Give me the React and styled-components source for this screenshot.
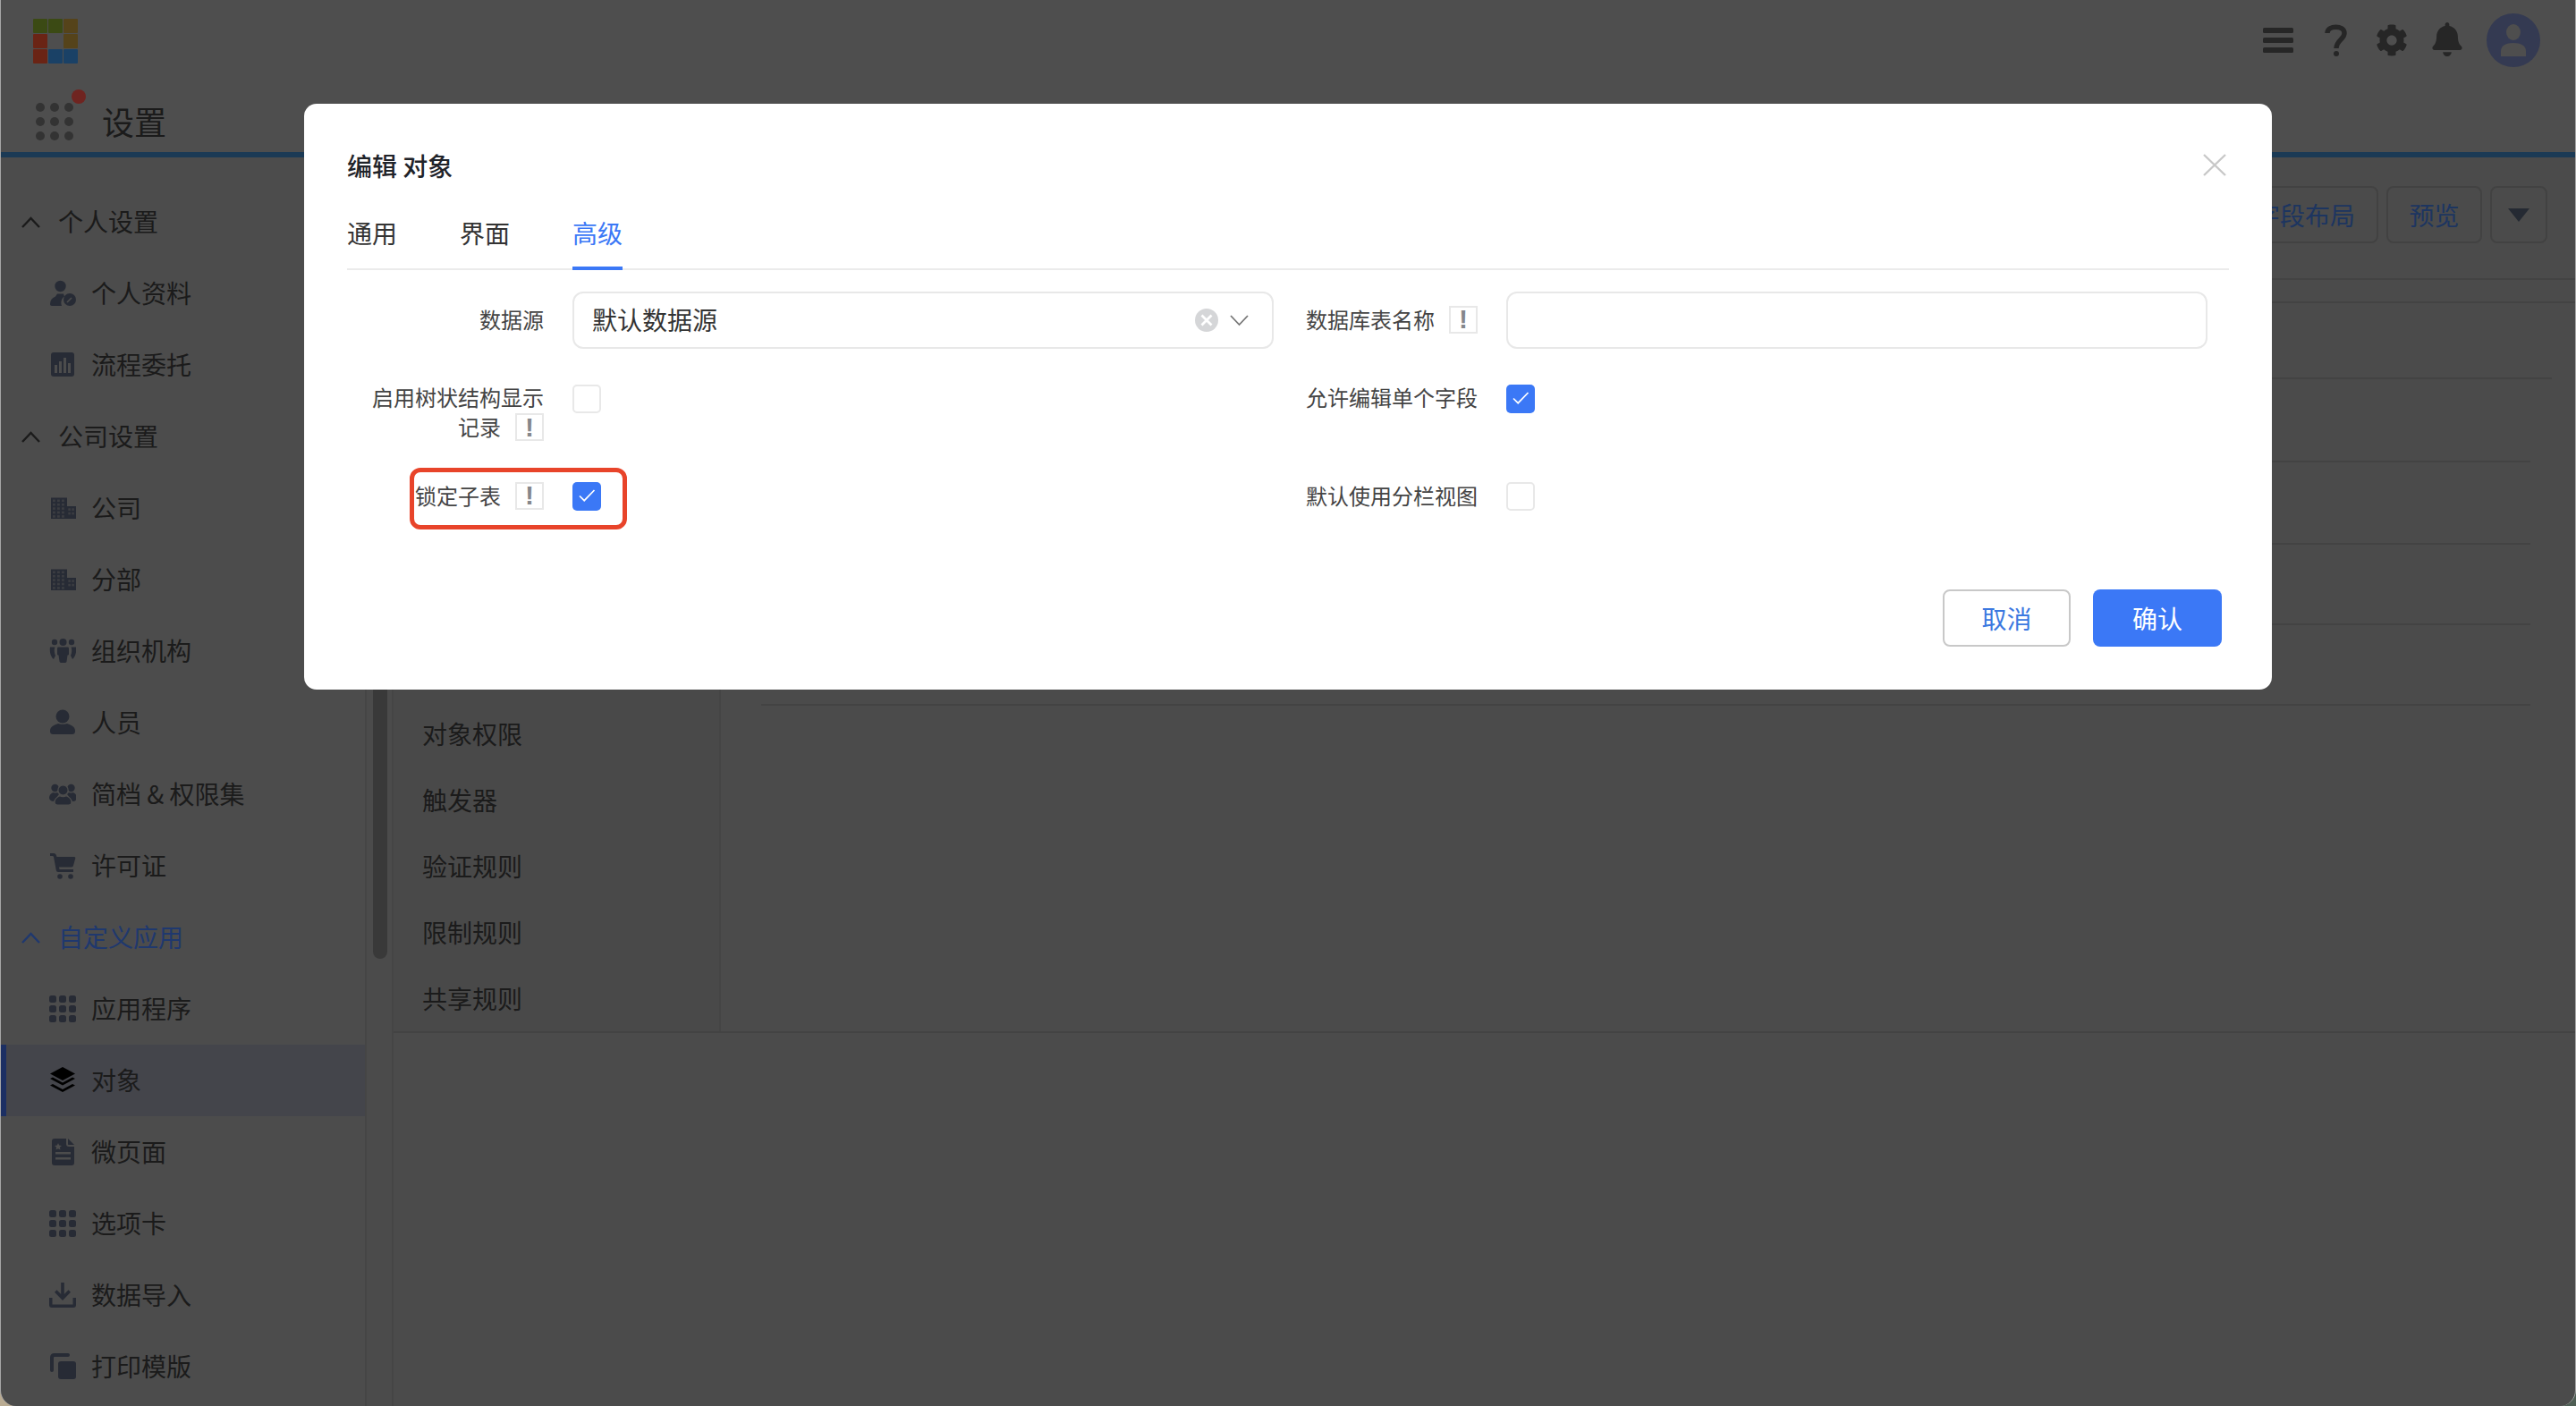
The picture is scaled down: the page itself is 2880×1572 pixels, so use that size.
import React from 'react';
import styled, { createGlobalStyle } from 'styled-components';
import { FaBell, FaCog } from 'react-icons/fa';

// the page behind the dialog is painted at twice its final brightness, the 50% mask halves it
const GlobalStyle = createGlobalStyle`
  html, body { margin: 0; padding: 0; }
  body {
    background: linear-gradient(90deg, #b9ab92 0 50%, #4f5f55 50% 100%);
    font-family: "Noto Sans CJK SC", "Noto Sans", sans-serif;
  }
  * { box-sizing: border-box; }
`;

const Window = styled.div`
  position: relative;
  width: 2880px;
  height: 1572px;
  overflow: hidden;
  border-radius: 0 0 18px 18px;
  background: #969696;
  display: flex;
  flex-direction: column;
  border-left: 1px solid #a6a6a6;
  border-right: 1px solid #a6a6a6;
`;

const TopBar = styled.header`
  height: 90px;
  background: #9c9c9c;
  display: flex;
  align-items: center;
  justify-content: space-between;
  padding: 0 39px 0 36px;
`;

const Logo = styled.div`
  display: grid;
  grid-template-columns: repeat(3, 16px);
  grid-auto-rows: 16px;
  gap: 1px;
  margin-top: 2px;
`;

const LogoCell = styled.span`
  background: ${p => p.$c};
  border-radius: 1px;
`;

const TopIcons = styled.div`
  display: flex;
  align-items: center;
`;

const TopIcon = styled.svg`
  display: block;
  color: #4c4c4c;
  margin-left: ${p => p.$ml || 0}px;
  margin-top: ${p => p.$mt || 0}px;
`;

const Avatar = styled.div`
  width: 60px;
  height: 60px;
  margin-left: 25px;
  border-radius: 50%;
  background: #6874a4;
  display: flex;
  align-items: center;
  justify-content: center;
`;

const AppBar = styled.div`
  height: 86px;
  padding: 12px 0 0 39px;
  background: #9c9c9c;
  border-bottom: 6px solid #3674aa;
  display: flex;
  align-items: center;
  gap: 32px;
`;

const Launcher = styled.div`
  position: relative;
  display: grid;
  grid-template-columns: repeat(3, 10px);
  grid-auto-rows: 10px;
  gap: 6px;
`;

const LauncherDot = styled.span`
  border-radius: 50%;
  background: #666;
`;

const Badge = styled.span`
  position: absolute;
  top: -15px;
  right: -14px;
  width: 16px;
  height: 16px;
  border-radius: 50%;
  background: #de4840;
`;

const AppTitle = styled.div`
  font-size: 36px;
  line-height: 48px;
  margin-top: -3px;
  color: #363636;
`;

const Main = styled.div`
  flex: 1;
  min-height: 0;
  display: flex;
`;

const Sidebar = styled.nav`
  width: 407px;
  padding-top: 32px;
  background: #989898;
  flex-shrink: 0;
`;

const SectionRow = styled.div`
  height: 80px;
  display: flex;
  align-items: center;
  gap: 20px;
  padding-left: 23px;
  font-size: 28px;
  color: ${p => (p.$blue ? '#3f70dc' : '#363636')};
`;

const NavRow = styled.div`
  height: 80px;
  display: flex;
  align-items: center;
  gap: 17px;
  padding-left: 54px;
  font-size: 28px;
  color: #363636;
  position: relative;
  background: ${p => (p.$active ? '#888a96' : 'transparent')};

  ${p => p.$active && `
    &::before {
      content: '';
      position: absolute;
      left: 0;
      top: 0;
      bottom: 0;
      width: 6px;
      background: #385ec6;
    }
  `}
`;

const RowLabel = styled.span`
  margin-bottom: 3px;
`;

const NavIcon = styled.svg`
  width: 30px;
  height: 30px;
  flex-shrink: 0;
  color: ${p => (p.$active ? '#000' : '#4e566a')};
`;

const Track = styled.div`
  width: 32px;
  flex-shrink: 0;
  padding: 20px 6px 0 7px;
  background: #969696;
  border-left: 2px solid #8a8a8a;
  border-right: 2px solid #8a8a8a;
`;

const Thumb = styled.div`
  width: 16px;
  height: 876px;
  border-radius: 0 0 8px 8px;
  background: #727272;
`;

const Content = styled.main`
  flex: 1;
  min-width: 0;
  display: flex;
  flex-direction: column;
`;

const ContentHeader = styled.div`
  height: 137px;
  padding: 32px 31px 0 0;
  display: flex;
  justify-content: flex-end;
  gap: 9px;
  border-bottom: 2px solid #868686;
`;

const HeaderButton = styled.button`
  height: 64px;
  width: ${p => p.$w}px;
  padding: 0;
  display: flex;
  align-items: center;
  justify-content: center;
  border: 2px solid #848484;
  border-radius: 8px;
  background: transparent;
  font-family: inherit;
  font-size: 28px;
  color: #3a6ac0;
`;

const Caret = styled.svg`
  width: 24px;
  height: 15px;
  color: #4a5466;
`;

const SubHeader = styled.div`
  height: 26px;
  border-bottom: 2px solid #868686;
`;

const Panel = styled.div`
  height: 816px;
  display: flex;
  border-bottom: 2px solid #868686;
`;

// the upper entries of this list sit behind the dialog
const SubNav = styled.div`
  width: 366px;
  padding: 445px 0 0 32px;
  background: #939393;
  border-right: 2px solid #8a8a8a;
  flex-shrink: 0;
`;

const SubNavItem = styled.div`
  height: 74px;
  padding-bottom: 3px;
  display: flex;
  align-items: center;
  font-size: 28px;
  color: #363636;
`;

const Rows = styled.div`
  flex: 1;
  padding: 0 50px 0 45px;
`;

const Row = styled.div`
  height: ${p => p.$h}px;
  margin-right: ${p => (p.$wide ? -24 : 0)}px;
  border-bottom: 2px solid #868686;
`;

const Mask = styled.div`
  position: absolute;
  inset: 0;
  background: rgba(0, 0, 0, 0.5);
  display: flex;
  justify-content: center;
  align-items: flex-start;
  padding-top: 116px;
`;

const Modal = styled.div`
  position: relative;
  width: 2200px;
  height: 655px;
  padding: 0 48px;
  background: #fff;
  border-radius: 14px;
`;

const ModalTitle = styled.h2`
  margin: 0;
  padding-top: 51px;
  font-size: 28px;
  line-height: 36px;
  font-weight: 500;
  color: #1f2329;
`;

const CloseIcon = styled.svg`
  position: absolute;
  top: 56px;
  right: 51px;
  width: 26px;
  height: 25px;
  color: #c8c8c8;
`;

const Tabs = styled.div`
  display: flex;
  align-items: flex-start;
  gap: 70px;
  height: 99px;
  padding-top: 39px;
  border-bottom: 2px solid #ebebeb;
`;

const Tab = styled.div`
  width: 56px;
  height: 60px;
  font-size: 28px;
  line-height: 36px;
  white-space: nowrap;
  color: ${p => (p.$active ? '#3b78f6' : '#333')};
  border-bottom: ${p => (p.$active ? '4px solid #3b78f6' : '0')};
`;

const Form = styled.div`
  display: grid;
  grid-template-columns: 1036px 1008px;
  column-gap: 36px;
  row-gap: 40px;
  grid-template-rows: 64px 68px 34px;
  padding-top: 24px;
`;

const Field = styled.div`
  position: relative;
  display: flex;
  gap: 32px;
  align-items: ${p => (p.$top ? 'flex-start' : 'center')};
`;

const Label = styled.div`
  width: ${p => p.$w}px;
  flex-shrink: 0;
  text-align: right;
  font-size: 24px;
  line-height: 33px;
  color: #444;
  margin-top: ${p => p.$mt || -4}px;
`;

const Hint = styled.span`
  display: inline-flex;
  align-items: center;
  justify-content: center;
  width: 32px;
  height: 31px;
  margin: 2px 0 0 16px;
  vertical-align: top;
  border: 2px solid #e8e8e8;
  font-family: "Liberation Sans", sans-serif;
  font-size: 30px;
  font-weight: 700;
  line-height: 1;
  color: #85878b;
`;

const Select = styled.div`
  flex: 1;
  height: 64px;
  padding: 0 26px 0 20px;
  display: flex;
  align-items: center;
  border: 2px solid #e8e8e8;
  border-radius: 12px;
  font-size: 28px;
  color: #333;
`;

const SelectValue = styled.span`
  flex: 1;
  margin-bottom: 2px;
`;

const ClearIcon = styled.svg`
  width: 26px;
  height: 26px;
  margin-right: 13px;
`;

const Chevron = styled.svg`
  width: 21px;
  height: 13px;
  color: #777;
`;

const TextInput = styled.div`
  flex: 1;
  height: 64px;
  border: 2px solid #e8e8e8;
  border-radius: 12px;
`;

const Checkbox = styled.span`
  width: 32px;
  height: 32px;
  flex-shrink: 0;
  display: flex;
  align-items: center;
  justify-content: center;
  border-radius: 5px;
  border: ${p => (p.$checked ? '0' : '2px solid #e8e8e8')};
  background: ${p => (p.$checked ? '#3b78f6' : '#fff')};
`;

const Highlight = styled.div`
  position: absolute;
  left: 70px;
  top: -15px;
  width: 243px;
  height: 69px;
  border: 5px solid #e8442a;
  border-radius: 12px;
  pointer-events: none;
`;

const Footer = styled.div`
  position: absolute;
  right: 56px;
  top: 543px;
  display: flex;
  gap: 25px;
`;

const CancelButton = styled.button`
  width: 143px;
  height: 64px;
  border: 2px solid #c8c8c8;
  border-radius: 8px;
  background: #fff;
  font-family: inherit;
  font-size: 28px;
  color: #3b78e0;
`;

const ConfirmButton = styled(CancelButton)`
  width: 144px;
  border: 0;
  background: #3b78f6;
  color: #fff;
`;

const Tick = () => (
  <svg width="32" height="32" viewBox="0 0 32 32" fill="none">
    <path d="M8 15.5l5.2 5.2L24.5 9" stroke="#fff" strokeWidth="1.700" />
  </svg>
);

const windows = [];
for (let r = 0; r < 5; r++) {
  for (let c = 0; c < 3; c++) windows.push([4 + c * 5, 5.5 + r * 4.4]);
}
const annex = [[22.5, 16.5], [26.5, 16.5], [22.5, 21], [26.500, 21]];

const Building = () => (
  <>
    <rect x="2" y="3.500" width="18" height="23.500" />
    <rect x="20" y="13" width="10" height="14" />
    {windows.map(([x, y]) => <rect key={`${x}-${y}`} x={x} y={y} width="2.800" height="2.600" fill="#989898" opacity="0.55" />)}
    {annex.map(([x, y]) => <rect key={`${x}-${y}`} x={x - 1.2} y={y - 1.2} width="2.600" height="2.600" fill="#989898" opacity="0.55" />)}
  </>
);

const AppsGrid = () => (
  <>
    {[0, 11, 22].map(y => [0, 11, 22].map(x => (
      <rect key={`${x}-${y}`} x={x} y={y} width="8" height="8" rx="2.5" />
    )))}
  </>
);

const iconShapes = {
  profile: (
    <>
      <circle cx="12.500" cy="7" r="6.200" />
      <path d="M1 27c0-4 2-7 6-8.500l2-3h7l1 3c-3 2-4.500 6-3 10.500H3c-1.200 0-2-.8-2-2z" />
      <circle cx="23" cy="22" r="7" />
      <path d="M20 25l5-5" stroke="#989898" strokeWidth="1.600" />
    </>
  ),
  bars: (
    <>
      <rect x="2" y="1" width="26" height="27" rx="3" />
      <g fill="#989898">
        <rect x="6" y="15" width="3" height="9" />
        <rect x="11" y="11" width="3" height="13" />
        <rect x="16" y="7" width="3" height="17" />
        <rect x="21" y="13" width="3" height="11" />
      </g>
    </>
  ),
  building: <Building />,
  org: (
    <>
      <circle cx="6" cy="5" r="3.200" />
      <circle cx="15.500" cy="5" r="4" />
      <circle cx="25" cy="5" r="3.200" />
      <path d="M10.500 10.500h10c1 0 1.500.6 1.500 1.500V18c0 1-.6 1.500-1.500 1.500l-1 7c-.2 1-1 1.500-3.500 1.500H15c-2.500 0-3.300-.5-3.500-1.500l-1-7c-1 0-1.500-.5-1.500-1.500v-6c0-.9.500-1.500 1.500-1.500z" />
      <path d="M1 10.500h5.500c-1 2-1 6.500.5 9.500l-2 4C2.500 22 0 17 1 10.500zM30 10.500h-5.500c1 2 1 6.500-.5 9.500l2 4c2.500-2 5-7 4-13.500z" />
    </>
  ),
  person: (
    <>
      <circle cx="15" cy="8" r="7.500" />
      <path d="M1 24c0-5 6-7 9-8 1.500 1 8.500 1 10 0 3 1 9 3 9 8 0 3-1 4-4 4H5c-3 0-4-1-4-4z" />
    </>
  ),
  profiles: (
    <>
      <circle cx="6.500" cy="8" r="4.200" />
      <circle cx="24.500" cy="8" r="4.200" />
      <path d="M0 19c0-3 2-5 4.500-6 1.200.8 3 .8 4.500 0l2 2-6 8C2 23 0 21 0 19zM31 19c0-3-2-5-4.500-6-1.200.8-3 .8-4.500 0l-2 2 6 8c3 0 5-2 5-4z" />
      <circle cx="15.500" cy="10.500" r="5.600" stroke="#989898" strokeWidth="1.200" />
      <path d="M6 24c0-4 3-6 6-7.200 1.500 1 5.500 1 7 0 3 1.200 6 3.200 6 7.200 0 2-1 3-3 3H9c-2 0-3-1-3-3z" stroke="#989898" strokeWidth="1.200" />
    </>
  ),
  cart: (
    <>
      <path d="M1 1h4c1.500 0 2.500 1 3 2.500L8.500 5H28c1 0 1.500.8 1.200 1.800l-2.200 8c-.3 1-1 1.700-2 1.700H11l.5 2.500H27v3H10c-1.200 0-2-.8-2.200-2L5 5c-.2-.7-.7-1-1.300-1H1z" />
      <circle cx="12" cy="27" r="2.800" />
      <circle cx="24" cy="27" r="2.800" />
    </>
  ),
  apps: <AppsGrid />,
  layers: (
    <>
      <path d="M15 0L29 7.500 15 15 1 7.500z" />
      <path d="M1 13l3-1.500L15 17.500l11-6 3 1.500-14 7.500z" />
      <path d="M1 20.500l3-1.500L15 25l11-6 3 1.500L15 28z" />
    </>
  ),
  page: (
    <>
      <path d="M6 0h13v6c0 2 1 3 3 3h6v18c0 2-1 3-3 3H6c-2 0-3-1-3-3V3c0-2 1-3 3-3z" />
      <path d="M21 0l7 7h-6c-.6 0-1-.4-1-1z" />
      <path d="M10 5l1.200 2.600 2.800.3-2.100 1.900.6 2.800L10 11.200l-2.500 1.400.6-2.800L6 7.900l2.800-.3z" fill="#989898" />
      <rect x="7" y="15" width="17" height="2.500" fill="#989898" />
      <rect x="7" y="21" width="17" height="2.500" fill="#989898" />
    </>
  ),
  download: (
    <>
      <path d="M13.200 1h3.600v13l4.700-4.700 2.500 2.500L15 21 6 11.800l2.500-2.500 4.700 4.700z" />
      <path d="M0 18h3.500v7.500h23V18H30v8c0 2-1 3-3 3H3c-2 0-3-1-3-3z" />
    </>
  ),
  copy: (
    <>
      <path d="M3 19V5c0-2 1-3 3-3h15" fill="none" stroke="currentColor" strokeWidth="4" strokeLinecap="round" />
      <rect x="10" y="9" width="20" height="20" rx="3" />
    </>
  ),
};

const sidebarRows = [
  { section: '个人设置' },
  { label: '个人资料', icon: 'profile' },
  { label: '流程委托', icon: 'bars' },
  { section: '公司设置' },
  { label: '公司', icon: 'building' },
  { label: '分部', icon: 'building' },
  { label: '组织机构', icon: 'org' },
  { label: '人员', icon: 'person' },
  { label: '简档 & 权限集', icon: 'profiles' },
  { label: '许可证', icon: 'cart' },
  { section: '自定义应用', blue: true },
  { label: '应用程序', icon: 'apps' },
  { label: '对象', icon: 'layers', active: true },
  { label: '微页面', icon: 'page' },
  { label: '选项卡', icon: 'apps' },
  { label: '数据导入', icon: 'download' },
  { label: '打印模版', icon: 'copy' },
];

const logoColors = ['#769428', '#769428', '#aa8634', '#d4482a', 'transparent', '#aa8634', '#d4482a', '#3482cc', '#3482cc'];
const subNavItems = ['对象权限', '触发器', '验证规则', '限制规则', '共享规则'];
const contentRows = [
  { h: 85, wide: true },
  { h: 93 },
  { h: 92 },
  { h: 90 },
  { h: 90 },
];

const SectionChevron = ({ blue }) => (
  <svg width="21" height="13" viewBox="0 0 21 13" fill="none" stroke={blue ? '#3f70dc' : '#363636'} strokeWidth="2.400">
    <path d="M1 12l9.500-10L20 12" />
  </svg>
);

const App = () => (
  <>
    <GlobalStyle />
    <Window>
      <TopBar>
        <Logo>
          {logoColors.map((c, i) => <LogoCell key={i} $c={c} />)}
        </Logo>
        <TopIcons>
          <TopIcon width="34" height="28" viewBox="0 0 34 28" fill="currentColor">
            <rect width="34" height="6" rx="1.500" />
            <rect y="11" width="34" height="6" rx="1.500" />
            <rect y="22" width="34" height="6" rx="1.500" />
          </TopIcon>
          <TopIcon $ml={35} width="25" height="36" viewBox="0 0 25 36" fill="none">
            <path d="M3 10C3 1 22 1 22 10c0 7-9 8-9 17" stroke="currentColor" strokeWidth="5.500" />
            <circle cx="13" cy="33" r="3" fill="currentColor" />
          </TopIcon>
          <TopIcon as={FaCog} $ml={32} size={36} />
          <TopIcon as={FaBell} $ml={25} size={38} $mt={-2} />
          <Avatar>
            <svg width="30" height="36" viewBox="0 0 30 36" fill="#9c9c9c">
              <ellipse cx="15" cy="9" rx="8" ry="9" />
              <path d="M1 36v-6c0-6 6-9 14-9s14 3 14 9v6z" />
            </svg>
          </Avatar>
        </TopIcons>
      </TopBar>
      <AppBar>
        <Launcher>
          {Array.from({ length: 9 }, (_, i) => <LauncherDot key={i} />)}
          <Badge />
        </Launcher>
        <AppTitle>设置</AppTitle>
      </AppBar>
      <Main>
        <Sidebar>
          {sidebarRows.map(row => (row.section ? (
            <SectionRow key={row.section} $blue={row.blue}>
              <SectionChevron blue={row.blue} />
              <RowLabel>{row.section}</RowLabel>
            </SectionRow>
          ) : (
            <NavRow key={row.label} $active={row.active}>
              <NavIcon viewBox="0 0 30 30" fill="currentColor" $active={row.active}>{iconShapes[row.icon]}</NavIcon>
              <RowLabel>{row.label}</RowLabel>
            </NavRow>
          )))}
        </Sidebar>
        <Track>
          <Thumb />
        </Track>
        <Content>
          <ContentHeader>
            <HeaderButton $w={164}>字段布局</HeaderButton>
            <HeaderButton $w={107}>预览</HeaderButton>
            <HeaderButton $w={64}>
              <Caret viewBox="0 0 24 15" fill="currentColor"><path d="M0 0h24L12 15z" /></Caret>
            </HeaderButton>
          </ContentHeader>
          <SubHeader />
          <Panel>
            <SubNav>
              {subNavItems.map(item => <SubNavItem key={item}>{item}</SubNavItem>)}
            </SubNav>
            <Rows>
              {contentRows.map((row, i) => <Row key={i} $h={row.h} $wide={row.wide} />)}
            </Rows>
          </Panel>
        </Content>
      </Main>
      <Mask>
        <Modal>
          <ModalTitle>编辑 对象</ModalTitle>
          <CloseIcon viewBox="0 0 26 25" fill="none" stroke="currentColor" strokeWidth="2.400">
            <path d="M1 1l24 23M25 1L1 24" />
          </CloseIcon>
          <Tabs>
            <Tab>通用</Tab>
            <Tab>界面</Tab>
            <Tab $active>高级</Tab>
          </Tabs>
          <Form>
            <Field>
              <Label $w={220}>数据源</Label>
              <Select>
                <SelectValue>默认数据源</SelectValue>
                <ClearIcon viewBox="0 0 26 26">
                  <circle cx="13" cy="13" r="13" fill="#d5d6d8" />
                  <path d="M7.500 7.500l11 11M18.500 7.500l-11 11" stroke="#fff" strokeWidth="2.800" />
                </ClearIcon>
                <Chevron viewBox="0 0 21 13" fill="none" stroke="currentColor" strokeWidth="1.800">
                  <path d="M1 1l9.500 10L20 1" />
                </Chevron>
              </Select>
            </Field>
            <Field>
              <Label $w={192}>数据库表名称<Hint>!</Hint></Label>
              <TextInput />
            </Field>
            <Field $top>
              <Label $w={220} $mt={-3}>启用树状结构显示<br />记录<Hint>!</Hint></Label>
              <Checkbox />
            </Field>
            <Field $top>
              <Label $w={192} $mt={-3}>允许编辑单个字段</Label>
              <Checkbox $checked><Tick /></Checkbox>
            </Field>
            <Field>
              <Label $w={220}>锁定子表<Hint>!</Hint></Label>
              <Checkbox $checked><Tick /></Checkbox>
              <Highlight />
            </Field>
            <Field>
              <Label $w={192}>默认使用分栏视图</Label>
              <Checkbox />
            </Field>
          </Form>
          <Footer>
            <CancelButton>取消</CancelButton>
            <ConfirmButton>确认</ConfirmButton>
          </Footer>
        </Modal>
      </Mask>
    </Window>
  </>
);

export default App;
